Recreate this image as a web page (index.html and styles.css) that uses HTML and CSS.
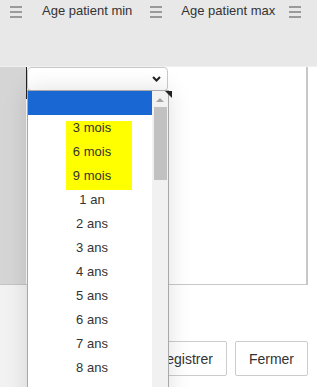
FILE: index.html
```html
<!DOCTYPE html>
<html lang="fr">
<head>
  <meta charset="UTF-8">
  <meta name="viewport" content="width=device-width, initial-scale=1.0">
  <title>Age patient</title>
  <link rel="stylesheet" href="styles.css">
</head>
<body>
  <div class="header">
    <svg class="menu" width="12" height="12" viewBox="0 0 12 12"><rect y="0" width="12" height="2"/><rect y="5" width="12" height="2"/><rect y="10" width="12" height="2"/></svg>
    <span class="col-title first">Age patient min</span>
    <svg class="menu" width="12" height="12" viewBox="0 0 12 12"><rect y="0" width="12" height="2"/><rect y="5" width="12" height="2"/><rect y="10" width="12" height="2"/></svg>
    <span class="col-title second">Age patient max</span>
    <svg class="menu" width="12" height="12" viewBox="0 0 12 12"><rect y="0" width="12" height="2"/><rect y="5" width="12" height="2"/><rect y="10" width="12" height="2"/></svg>
  </div>

  <div class="grid">
    <div class="gutter"></div>
    <div class="cells">
      <div class="cell active">
        <div class="select">
          <svg width="9" height="6" viewBox="0 0 9 6"><path d="M1 1 L4.5 4.5 L8 1" fill="none" stroke="#222" stroke-width="2"/></svg>
        </div>
      </div>
    </div>
  </div>

  <div class="footer">
    <div class="gutter-foot"></div>
    <div class="actions">
      <button>Enregistrer</button>
      <button>Fermer</button>
    </div>
  </div>

  <!-- native select popup, drawn over the page -->
  <div class="dropdown">
    <div class="options">
      <div class="opt selected"></div>
      <div class="opt">3 mois</div>
      <div class="opt">6 mois</div>
      <div class="opt">9 mois</div>
      <div class="opt">1 an</div>
      <div class="opt">2 ans</div>
      <div class="opt">3 ans</div>
      <div class="opt">4 ans</div>
      <div class="opt">5 ans</div>
      <div class="opt">6 ans</div>
      <div class="opt">7 ans</div>
      <div class="opt">8 ans</div>
      <div class="opt">9 ans</div>
    </div>
    <div class="scrollbar">
      <div class="arrow"></div>
      <div class="thumb"></div>
    </div>
  </div>
  <div class="corner"></div>
</body>
</html>
```

FILE: styles.css
```css
body {
  margin: 0;
  width: 317px;
  height: 387px;
  overflow: hidden;
  position: relative;
  background: #fff;
  font-family: "Liberation Sans", Arial, sans-serif;
  color: #333;
}

.header {
  height: 67px;
  background: #e8e8e8;
  border-bottom: 1px solid #f0f0f0;
  display: flex;
  align-items: flex-start;
  padding: 3px 0 0 10px;
  box-sizing: border-box;
}

.menu {
  fill: #9a9a9a;
  margin-top: 3px;
  flex: none;
}

.col-title {
  font-size: 13px;
  line-height: 16px;
  white-space: nowrap;
}

.col-title.first {
  margin: 0 18px 0 20px;
}

.col-title.second {
  margin: 0 14px 0 19px;
}

.grid {
  display: flex;
  height: 218px;
}

.gutter {
  width: 26px;
  background: #d5d5d5;
  border-bottom: 1px solid #c4c4c4;
  box-sizing: border-box;
}

.cells {
  width: 282px;
  border-right: 2px solid #c8c8c8;
  border-bottom: 1px solid #c8c8c8;
  box-sizing: border-box;
}

.cell.active {
  height: 32px;
  border-left: 1px solid #222;
  box-sizing: border-box;
  width: 143px;
}

.select {
  height: 24px;
  width: 141px;
  border: 1px solid #c9c9c9;
  border-radius: 4px;
  box-sizing: border-box;
  background: #fff;
  display: flex;
  align-items: center;
  justify-content: flex-end;
  padding-right: 6px;
}

.footer {
  display: flex;
  height: 102px;
}

.gutter-foot {
  width: 28px;
  background: #f2f2f2;
  border-right: 1px solid #cfcfcf;
  box-sizing: border-box;
}

.actions {
  flex: 1;
  display: flex;
  justify-content: flex-end;
  align-items: flex-start;
  gap: 8px;
  padding: 56px 9px 0 0;
}

button {
  height: 35px;
  padding: 0 13px;
  border: 1px solid #cccccc;
  border-radius: 2px;
  background: #fff;
  color: #333;
  font-family: "Liberation Sans", Arial, sans-serif;
  font-size: 14px;
}

.dropdown {
  position: absolute;
  left: 27px;
  top: 90px;
  width: 142px;
  height: 320px;
  border: 1px solid #a9a9a9;
  box-sizing: border-box;
  background: #fff;
  display: flex;
  box-shadow: 0 0 22px rgba(0, 0, 0, 0.13);
}

.options {
  width: 124px;
  background: #fff linear-gradient(#ffff00, #ffff00) 38px 30px / 66px 69px no-repeat;
}

.opt {
  height: 24px;
  line-height: 25px;
  font-size: 13px;
  text-align: center;
  padding-left: 4px;
  color: #333;
}

.opt.selected {
  background: #1967d2;
}

.scrollbar {
  width: 16px;
  background: #f1f1f1;
  display: flex;
  flex-direction: column;
  align-items: center;
}

.arrow {
  margin-top: 7px;
  border-left: 4px solid transparent;
  border-right: 4px solid transparent;
  border-bottom: 4px solid #a3a3a3;
}

.thumb {
  margin-top: 5px;
  width: 13px;
  height: 73px;
  background: #c1c1c1;
}

.corner {
  position: absolute;
  left: 165px;
  top: 91px;
  border-top: 7px solid #222;
  border-left: 7px solid transparent;
}
```
